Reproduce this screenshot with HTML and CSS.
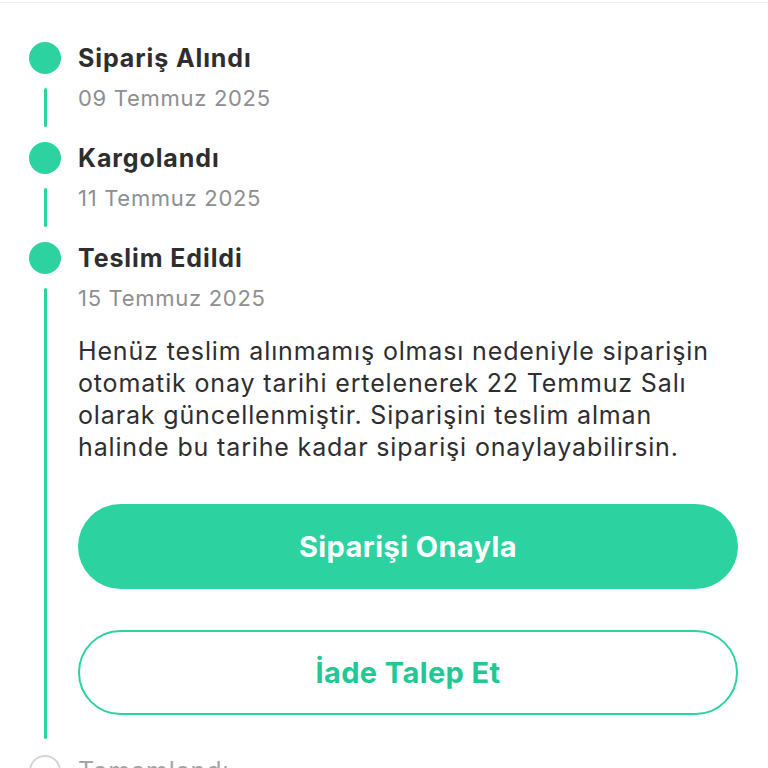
FILE: index.html
```html
<!DOCTYPE html>
<html lang="tr">
<head>
    <meta charset="UTF-8">
    <meta name="viewport" content="width=device-width, initial-scale=1.0">
    <title>Sipariş Durumu</title>
    <link rel="stylesheet" href="styles.css">
</head>
<body>
    <div class="top-edge"></div>

    <div class="timeline">
        <!-- Step 1 -->
        <div class="step done">
            <div class="rail">
                <span class="dot"></span>
                <span class="line"></span>
            </div>
            <div class="step-body">
                <div class="step-title">Sipariş Alındı</div>
                <div class="step-date">09 Temmuz 2025</div>
            </div>
        </div>

        <!-- Step 2 -->
        <div class="step done">
            <div class="rail">
                <span class="dot"></span>
                <span class="line"></span>
            </div>
            <div class="step-body">
                <div class="step-title">Kargolandı</div>
                <div class="step-date">11 Temmuz 2025</div>
            </div>
        </div>

        <!-- Step 3 -->
        <div class="step done current">
            <div class="rail">
                <span class="dot"></span>
                <span class="line"></span>
            </div>
            <div class="step-body">
                <div class="step-title">Teslim Edildi</div>
                <div class="step-date">15 Temmuz 2025</div>
                <p class="step-note">Henüz teslim alınmamış olması nedeniyle siparişin otomatik onay tarihi ertelenerek 22 Temmuz Salı olarak güncellenmiştir. Siparişini teslim alman halinde bu tarihe kadar siparişi onaylayabilirsin.</p>
                <button class="btn btn-primary">Siparişi Onayla</button>
                <button class="btn btn-outline">İade Talep Et</button>
            </div>
        </div>

        <!-- Step 4 -->
        <div class="step">
            <div class="rail">
                <span class="dot"></span>
            </div>
            <div class="step-body">
                <div class="step-title">Tamamlandı</div>
            </div>
        </div>
    </div>
</body>
</html>
```

FILE: styles.css
```css
/* General page styles */
body {
    margin: 0;
    padding: 0;
    background-color: #fff;
    font-family: Inter, "Noto Sans", sans-serif;
    color: #2e2e30;
}

.top-edge {
    height: 2px;
    border-bottom: 1px solid #efefef;
}

/* Timeline */
.timeline {
    padding: 39px 30px 0 29px;
}

.step {
    display: flex;
    gap: 17px;
}

.rail {
    width: 32px;
    display: flex;
    flex-direction: column;
    align-items: center;
    flex-shrink: 0;
}

.dot {
    width: 32px;
    height: 32px;
    border-radius: 50%;
    box-sizing: border-box;
    border: 2px solid #d4d4d6;
    background-color: #fff;
}

.step.done .dot {
    border: none;
    background-color: #2cd3a0;
}

.line {
    flex-grow: 1;
    width: 3px;
    border-radius: 2px;
    margin: 14px 0 15px;
    background-color: #2cd3a0;
}

.step.current .line {
    margin-bottom: 16px;
}

.step-body {
    flex-grow: 1;
    padding-bottom: 30px;
}

.step-title {
    font-size: 25px;
    font-weight: 700;
    line-height: 32px;
    letter-spacing: 0.9px;
}

.step:not(.done) .step-title {
    color: #a4a4a8;
    font-weight: 400;
}

.step-date {
    font-size: 22px;
    line-height: 28px;
    margin-top: 10px;
    letter-spacing: 0.7px;
    color: #8e8e93;
}

.step-note {
    margin: 23px 0 41px;
    font-size: 25px;
    line-height: 32px;
    letter-spacing: 0.85px;
    color: #2e2e30;
}

/* Buttons */
.btn {
    display: block;
    width: 100%;
    height: 85px;
    border-radius: 43px;
    font-family: inherit;
    font-size: 29px;
    font-weight: 700;
    letter-spacing: 0.4px;
    cursor: pointer;
    box-sizing: border-box;
}

.btn-primary {
    background-color: #2cd3a0;
    border: none;
    color: #fff;
    margin-bottom: 41px;
}

.btn-outline {
    background-color: #fff;
    border: 2px solid #2cd3a0;
    color: #22c893;
    margin-bottom: 10px;
}
```
